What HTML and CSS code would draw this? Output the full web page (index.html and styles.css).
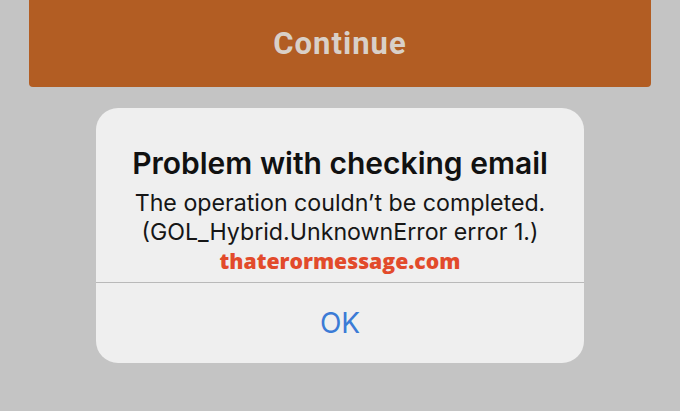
FILE: index.html
```html
<!DOCTYPE html>
<html>
<head>
<meta charset="utf-8">
<link rel="stylesheet" href="styles.css">
</head>
<body>
<div class="continue-bar">Continue</div>
<div class="alert">
  <div class="alert-body">
    <div class="alert-title">Problem with checking email</div>
    <div class="alert-msg">The operation couldn’t be completed.<br>(GOL_Hybrid.UnknownError error 1.)</div>
    <div class="watermark">thaterormessage.com</div>
  </div>
  <div class="alert-btn">OK</div>
</div>
</body>
</html>
```
FILE: styles.css
```css
html, body {
  margin: 0;
  padding: 0;
}
body {
  background: #c4c4c4;
  width: 680px;
  height: 411px;
  overflow: hidden;
  font-family: Inter, "Liberation Sans", Arial, sans-serif;
}
.continue-bar {
  margin: 0 29px;
  height: 87px;
  background: #b25d23;
  border-radius: 0 0 4px 4px;
  display: flex;
  align-items: center;
  justify-content: center;
  color: #d9d0c8;
  font-family: Roboto, sans-serif;
  font-weight: 700;
  font-size: 31px;
  letter-spacing: 1px;
}
.alert {
  width: 488px;
  margin: 21px auto 0;
  background: #efefef;
  border-radius: 22px;
  overflow: hidden;
}
.alert-body {
  padding: 38px 6px 7px;
  text-align: center;
}
.alert-title {
  font-size: 30px;
  line-height: 34px;
  font-weight: 600;
  color: #111;
}
.alert-msg {
  margin-top: 9px;
  font-size: 23.2px;
  line-height: 29px;
  color: #161616;
}
.watermark {
  font-family: "Open Sans", sans-serif;
  font-weight: 800;
  font-size: 21.2px;
  line-height: 28px;
  color: #e24a2b;
}
.alert-btn {
  border-top: 1px solid #b9b9b9;
  height: 80px;
  display: flex;
  align-items: center;
  justify-content: center;
  color: #3b7bd6;
  font-size: 28px;
}
```
